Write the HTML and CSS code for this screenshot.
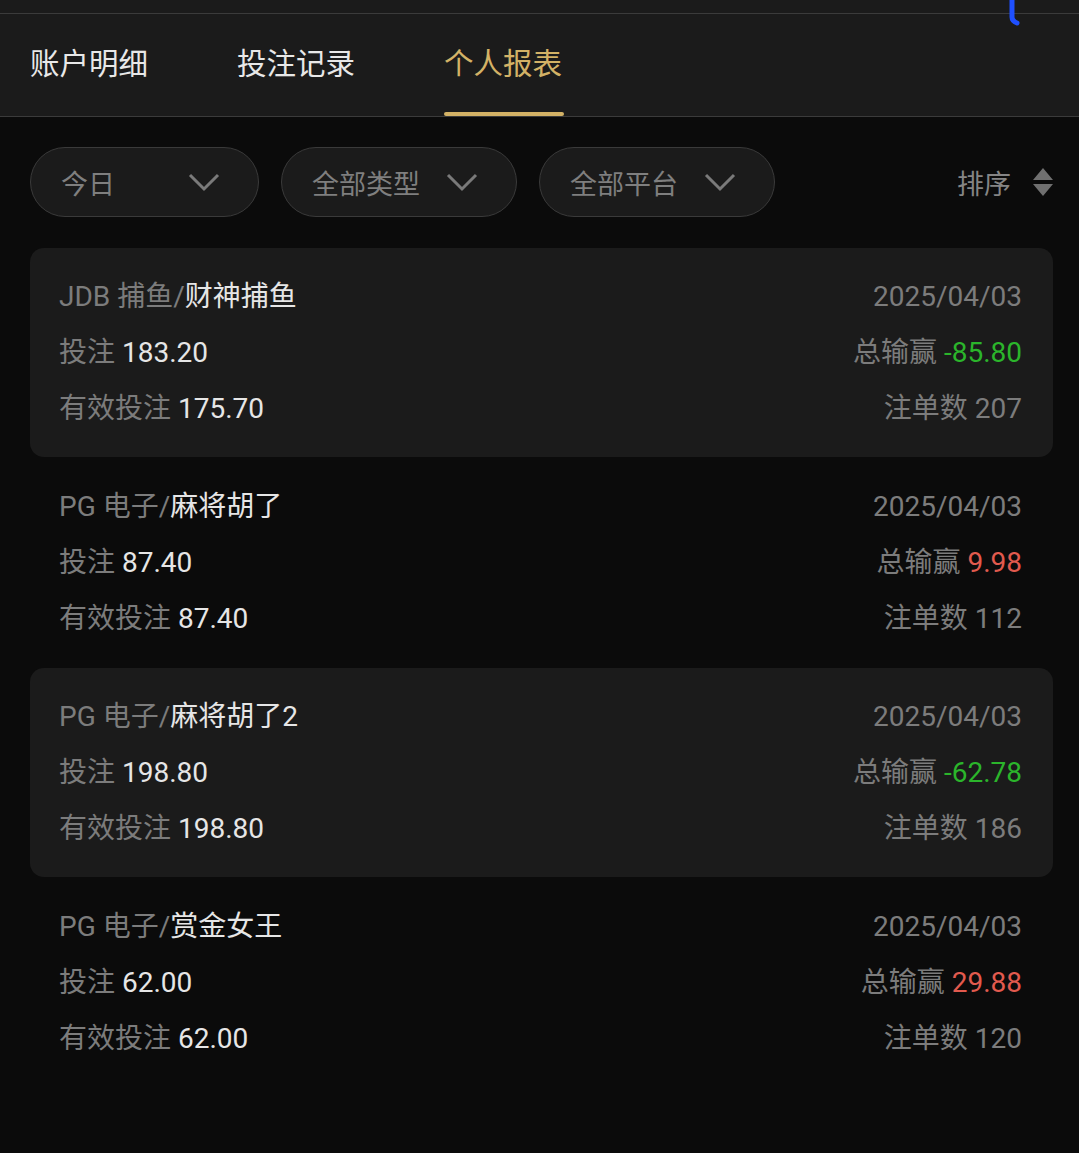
FILE: index.html
```html
<!DOCTYPE html>
<html lang="zh-CN">
<head>
    <meta charset="UTF-8">
    <meta name="viewport" content="width=device-width, initial-scale=1.0">
    <title>个人报表</title>
    <link rel="stylesheet" href="styles.css">
</head>
<body>
    <div class="topbar">
        <svg class="pen-mark" width="20" height="30" viewBox="0 0 20 30">
            <path d="M7 0 L7 17 Q7 21 12 23" fill="none" stroke="#1f50ff" stroke-width="5" stroke-linecap="round"/>
        </svg>
    </div>

    <div class="tabs">
        <div class="tab">账户明细</div>
        <div class="tab">投注记录</div>
        <div class="tab active">个人报表</div>
    </div>

    <div class="content">
        <div class="filters">
            <div class="pill pill-short">
                <span>今日</span>
                <svg class="chevron" width="32" height="20" viewBox="0 0 32 20"><path d="M2 3 L16 17 L30 3" fill="none" stroke="#7a7a7a" stroke-width="3"/></svg>
            </div>
            <div class="pill">
                <span>全部类型</span>
                <svg class="chevron" width="32" height="20" viewBox="0 0 32 20"><path d="M2 3 L16 17 L30 3" fill="none" stroke="#7a7a7a" stroke-width="3"/></svg>
            </div>
            <div class="pill">
                <span>全部平台</span>
                <svg class="chevron" width="32" height="20" viewBox="0 0 32 20"><path d="M2 3 L16 17 L30 3" fill="none" stroke="#7a7a7a" stroke-width="3"/></svg>
            </div>
            <div class="sort">
                <span>排序</span>
                <svg width="20" height="30" viewBox="0 0 20 30"><path d="M10 1 L20 13 L0 13 Z M0 17 L20 17 L10 29 Z" fill="#707070"/></svg>
            </div>
        </div>

        <div class="list">
            <div class="record shaded">
                <div class="row">
                    <div><span class="label">JDB 捕鱼/</span><span class="value">财神捕鱼</span></div>
                    <div class="label">2025/04/03</div>
                </div>
                <div class="row">
                    <div><span class="label">投注</span> <span class="value">183.20</span></div>
                    <div><span class="label">总输赢</span> <span class="loss">-85.80</span></div>
                </div>
                <div class="row">
                    <div><span class="label">有效投注</span> <span class="value">175.70</span></div>
                    <div class="label">注单数 207</div>
                </div>
            </div>

            <div class="record">
                <div class="row">
                    <div><span class="label">PG 电子/</span><span class="value">麻将胡了</span></div>
                    <div class="label">2025/04/03</div>
                </div>
                <div class="row">
                    <div><span class="label">投注</span> <span class="value">87.40</span></div>
                    <div><span class="label">总输赢</span> <span class="win">9.98</span></div>
                </div>
                <div class="row">
                    <div><span class="label">有效投注</span> <span class="value">87.40</span></div>
                    <div class="label">注单数 112</div>
                </div>
            </div>

            <div class="record shaded">
                <div class="row">
                    <div><span class="label">PG 电子/</span><span class="value">麻将胡了2</span></div>
                    <div class="label">2025/04/03</div>
                </div>
                <div class="row">
                    <div><span class="label">投注</span> <span class="value">198.80</span></div>
                    <div><span class="label">总输赢</span> <span class="loss">-62.78</span></div>
                </div>
                <div class="row">
                    <div><span class="label">有效投注</span> <span class="value">198.80</span></div>
                    <div class="label">注单数 186</div>
                </div>
            </div>

            <div class="record">
                <div class="row">
                    <div><span class="label">PG 电子/</span><span class="value">赏金女王</span></div>
                    <div class="label">2025/04/03</div>
                </div>
                <div class="row">
                    <div><span class="label">投注</span> <span class="value">62.00</span></div>
                    <div><span class="label">总输赢</span> <span class="win">29.88</span></div>
                </div>
                <div class="row">
                    <div><span class="label">有效投注</span> <span class="value">62.00</span></div>
                    <div class="label">注单数 120</div>
                </div>
            </div>
        </div>
    </div>
</body>
</html>
```

FILE: styles.css
```css
body {
    font-family: Roboto, "Noto Sans CJK SC", sans-serif;
    background-color: #0b0b0b;
    margin: 0;
    color: #e6e6e6;
}
.topbar {
    position: relative;
    height: 13px;
    background: #1b1b1b;
    border-bottom: 1px solid #3b3b3b;
}
.pen-mark {
    position: absolute;
    left: 1005px;
    top: 0;
}
.tabs {
    display: flex;
    gap: 89px;
    height: 102px;
    padding-left: 30px;
    background: #1b1b1b;
    border-bottom: 1px solid #3b3b3b;
}
.tab {
    position: relative;
    display: flex;
    align-items: center;
    padding-bottom: 8px;
    font-size: 29.5px;
    color: #e8e8e8;
}
.tab.active {
    color: #d3b266;
}
.tab.active::after {
    content: "";
    position: absolute;
    left: 0;
    right: -2px;
    bottom: 0;
    height: 4px;
    border-radius: 2px;
    background: #d3b266;
}
.content {
    padding: 30px 26px 0 30px;
}
.filters {
    display: flex;
    align-items: center;
    gap: 22px;
}
.pill {
    display: flex;
    align-items: center;
    justify-content: space-between;
    box-sizing: border-box;
    width: 236px;
    height: 70px;
    padding: 0 38px 0 30px;
    border: 1.5px solid #3a3a3a;
    border-radius: 35px;
    background: #1b1b1b;
    font-size: 27px;
    color: #7f7f7f;
}
.pill-short {
    width: 229px;
}
.sort {
    display: flex;
    align-items: center;
    gap: 22px;
    margin-left: auto;
    font-size: 27px;
    color: #858585;
}
.list {
    margin-top: 31px;
}
.record {
    display: flex;
    flex-direction: column;
    gap: 20px;
    height: 209px;
    box-sizing: border-box;
    padding: 31px 31px 0 29px;
    border-radius: 14px;
    margin-bottom: 1px;
}
.shaded {
    background: #1b1b1b;
}
.row {
    display: flex;
    justify-content: space-between;
    line-height: 36px;
    font-size: 28px;
}
.label {
    color: #7c7c7c;
}
.value {
    color: #e6e6e6;
}
.loss {
    color: #2bb52b;
}
.win {
    color: #e25a4e;
}
```
